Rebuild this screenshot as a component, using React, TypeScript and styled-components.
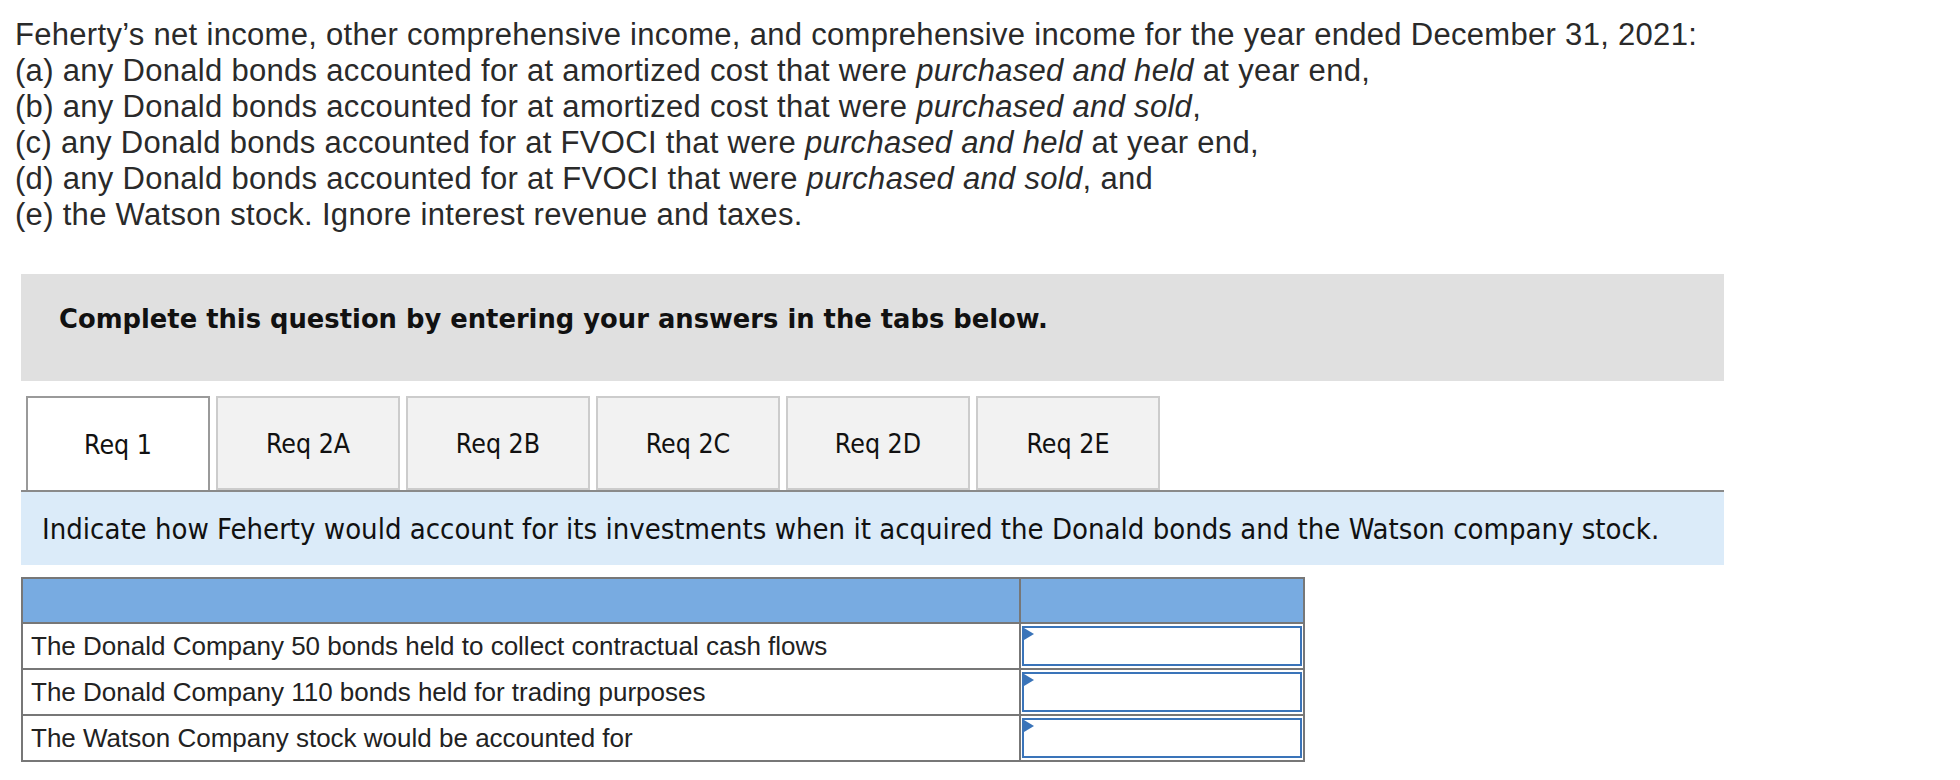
import React, { FC } from 'react';
import styled, { createGlobalStyle } from 'styled-components';

const GlobalStyle = createGlobalStyle`
  body {
    margin: 0;
    background: #fff;
  }
`;

const Page = styled.div`
  padding-top: 17px;
`;

const Prompt = styled.div`
  padding-left: 15px;
  font-family: 'Liberation Sans', Arial, sans-serif;
  font-size: 31px;
  letter-spacing: 0.3px;
  line-height: 36px;
  color: #2a2a2a;

  em {
    font-style: italic;
  }
`;

const PromptLine = styled.div`
  white-space: nowrap;
`;

const Panel = styled.div`
  margin: 41px 0 0 21px;
  width: 1703px;
`;

const Instructions = styled.div`
  height: 107px;
  box-sizing: border-box;
  padding: 28px 0 0 38px;
  background: #e0e0e0;
  font-family: 'DejaVu Sans', Verdana, sans-serif;
  font-weight: bold;
  font-size: 25.8px;
  line-height: 34px;
  color: #111;
`;

const TabBar = styled.div`
  display: flex;
  gap: 6px;
  margin-top: 15px;
  padding-left: 5px;
  border-bottom: 2px solid #8a8a8a;
`;

const Tab = styled.div<{ $active?: boolean }>`
  width: 184px;
  height: 94px;
  box-sizing: border-box;
  display: flex;
  align-items: center;
  justify-content: center;
  margin-bottom: ${(p) => (p.$active ? '-2px' : '0')};
  background: ${(p) => (p.$active ? '#fff' : '#f2f2f2')};
  border: 2px solid ${(p) => (p.$active ? '#9a9a9a' : '#cccccc')};
  border-bottom: ${(p) => (p.$active ? 'none' : '2px solid #cccccc')};
  font-family: 'DejaVu Sans Condensed', 'DejaVu Sans', Tahoma, sans-serif;
  font-stretch: condensed;
  font-size: 26.5px;
  color: #111;
`;

const Band = styled.div`
  height: 73px;
  box-sizing: border-box;
  display: flex;
  align-items: center;
  padding-left: 21px;
  background: #dbebf9;
  font-family: 'DejaVu Sans Condensed', 'DejaVu Sans', Tahoma, sans-serif;
  font-stretch: condensed;
  font-size: 29px;
  color: #111;
`;

const Table = styled.table`
  margin-top: 12px;
  width: 1284px;
  border-collapse: collapse;
  border: 2px solid #777;
  font-family: 'Liberation Sans', Arial, sans-serif;
  font-size: 26px;
  color: #222;
`;

const HeadCell = styled.th`
  height: 43px;
  padding: 0;
  background: #78abe1;
  border: 2px solid #777;
`;

const LabelCell = styled.td`
  width: 988px;
  height: 42px;
  padding: 0 0 0 8px;
  border: 2px solid #777;
  background: #fff;
  line-height: 30px;
`;

const InputCell = styled.td`
  height: 42px;
  padding: 1px;
  border: 2px solid #777;
  background: #fff;
`;

const AnswerBox = styled.div`
  position: relative;
  height: 40px;
  box-sizing: border-box;
  border: 2px solid #3a74b9;
  background: #fff;
`;

const Marker = styled.span`
  position: absolute;
  left: 0;
  top: 0;
  width: 0;
  height: 0;
  border-top: 6px solid transparent;
  border-bottom: 6px solid transparent;
  border-left: 10px solid #3a74b9;
`;

const ROWS = [
  'The Donald Company 50 bonds held to collect contractual cash flows',
  'The Donald Company 110 bonds held for trading purposes',
  'The Watson Company stock would be accounted for',
];

const TABS = ['Req 1', 'Req 2A', 'Req 2B', 'Req 2C', 'Req 2D', 'Req 2E'];

const App: FC = () => {
  return (
    <Page>
      <GlobalStyle />
      <Prompt>
        <PromptLine>
          Feherty’s net income, other comprehensive income, and comprehensive income for the year ended December 31, 2021:
        </PromptLine>
        <PromptLine>
          (a) any Donald bonds accounted for at amortized cost that were <em>purchased and held</em> at year end,
        </PromptLine>
        <PromptLine>
          (b) any Donald bonds accounted for at amortized cost that were <em>purchased and sold</em>,
        </PromptLine>
        <PromptLine>
          (c) any Donald bonds accounted for at FVOCI that were <em>purchased and held</em> at year end,
        </PromptLine>
        <PromptLine>
          (d) any Donald bonds accounted for at FVOCI that were <em>purchased and sold</em>, and
        </PromptLine>
        <PromptLine>(e) the Watson stock. Ignore interest revenue and taxes.</PromptLine>
      </Prompt>
      <Panel>
        <Instructions>Complete this question by entering your answers in the tabs below.</Instructions>
        <TabBar>
          {TABS.map((t, i) => (
            <Tab key={t} $active={i === 0}>
              {t}
            </Tab>
          ))}
        </TabBar>
        <Band>
          Indicate how Feherty would account for its investments when it acquired the Donald bonds and the Watson company stock.
        </Band>
        <Table>
          <thead>
            <tr>
              <HeadCell />
              <HeadCell />
            </tr>
          </thead>
          <tbody>
            {ROWS.map((r) => (
              <tr key={r}>
                <LabelCell>{r}</LabelCell>
                <InputCell>
                  <AnswerBox>
                    <Marker />
                  </AnswerBox>
                </InputCell>
              </tr>
            ))}
          </tbody>
        </Table>
      </Panel>
    </Page>
  );
};

export default App;
